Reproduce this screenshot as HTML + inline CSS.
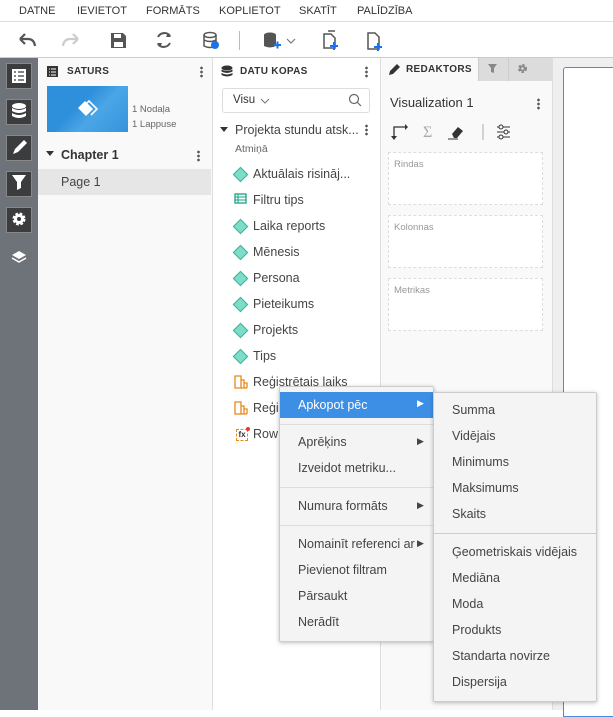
<!DOCTYPE html>
<html><head><meta charset="utf-8"><style>
*{box-sizing:border-box;margin:0;padding:0}
body{width:613px;height:710px;overflow:hidden;font-family:"Liberation Sans",sans-serif;background:#fff;position:relative;color:#333}
.a{position:absolute}
.menu span{position:absolute;top:5px;font-size:11px;color:#333}
.t{font-size:12.5px;color:#444;white-space:nowrap}
.dia{position:absolute;width:11px;height:11px;background:#7fdcc8;border:1px solid #2fb79a;transform:rotate(45deg)}
.vd{position:absolute;width:3px;height:12px;background:radial-gradient(circle,#555 1.2px,transparent 1.5px) 0 0/3px 4px}
.sb{position:absolute;left:6px;width:26px;height:26px;background:#3b3c3e;border:1px solid #888}
.cm div{position:absolute;font-size:12.5px;color:#444;white-space:nowrap}
</style></head><body>
<div class="a menu" style="left:0;top:0;width:613px;height:22px;border-bottom:1px solid #ddd">
<span style="left:19px">DATNE</span><span style="left:77px">IEVIETOT</span><span style="left:146px">FORMĀTS</span><span style="left:219px">KOPLIETOT</span><span style="left:299px">SKATĪT</span><span style="left:357px">PALĪDZĪBA</span></div>
<div class="a" style="left:0;top:22px;width:613px;height:36px;border-bottom:1px solid #ccc;background:#fff"></div>
<svg class="a" style="left:0;top:22px" width="400" height="36">
<path d="M20 17 l5-5 M20 17 l5 5 M20 17 h8 q6 0 7 7" stroke="#555" stroke-width="2.2" fill="none"/>
<path d="M78 17 l-5-5 M78 17 l-5 5 M78 17 h-8 q-6 0-7 7" stroke="#ccc" stroke-width="2.2" fill="none"/>
<path d="M111 11h12l3 3v12h-15z" fill="#555"/><rect x="114" y="12" width="7" height="4" fill="#fff"/><rect x="114" y="20" width="9" height="5" fill="#fff"/>
<path d="M158 15a7 7 0 0 1 12-1 M170 21a7 7 0 0 1-12 1" stroke="#555" stroke-width="2" fill="none"/><path d="M168 11l3 4h-5zM160 25l-3-4h5z" fill="#555"/>
<ellipse cx="210" cy="13" rx="6" ry="2.5" fill="none" stroke="#555" stroke-width="1.5"/><path d="M204 13v11q6 3 12 0v-11M204 18q6 3 12 0" stroke="#555" stroke-width="1.5" fill="none"/><circle cx="215" cy="23" r="4" fill="#1a73e8"/>
<rect x="239" y="9" width="1" height="19" fill="#bbb"/>
<ellipse cx="270" cy="13" rx="6" ry="2.5" fill="#555"/><path d="M264 13v11q6 3 12 0v-11z" fill="#555"/><path d="M274 23h7M277.5 19.5v7" stroke="#1a73e8" stroke-width="2"/>
<path d="M287 17l4 4 4-4" stroke="#777" stroke-width="1.2" fill="none"/>
<path d="M324 12h7l4 4v10h-11z" fill="none" stroke="#555" stroke-width="1.5"/><path d="M328 9h7" stroke="#555" stroke-width="1.5"/><path d="M330 24h8M334 20v8" stroke="#1a73e8" stroke-width="2"/>
<path d="M368 11h7l4 4v12h-11z" fill="none" stroke="#555" stroke-width="1.5"/><path d="M374 25h8M378 21v8" stroke="#1a73e8" stroke-width="2"/>
</svg>
<div class="a" style="left:0;top:58px;width:38px;height:652px;background:#6e7379"></div>
<div class="sb" style="top:63px"></div><div class="sb" style="top:99px"></div><div class="sb" style="top:135px"></div><div class="sb" style="top:171px"></div><div class="sb" style="top:207px"></div>
<svg class="a" style="left:0;top:58px" width="38" height="220">
<rect x="12" y="11" width="14" height="14" fill="#fff"/><path d="M14 14h2M18 14h6M14 18h2M18 18h6M14 22h2M18 22h6" stroke="#3b3c3e" stroke-width="1.3"/>
<ellipse cx="19" cy="48" rx="7" ry="3" fill="#fff"/><path d="M12 50q7 4 14 0v3q-7 4-14 0zM12 55q7 4 14 0v3q-7 4-14 0z" fill="#fff"/>
<path d="M13 96l2-5 9-9 3 3-9 9z" fill="#fff"/>
<path d="M12 117h14l-5 7v6l-4 2v-8z" fill="#fff"/>
<circle cx="19" cy="161" r="5" fill="#fff" stroke="#fff" stroke-width="3" stroke-dasharray="2.5 1.5"/><circle cx="19" cy="161" r="2" fill="#3b3c3e"/>
<path d="M12 197l7-4 7 4-7 4z" fill="#fff"/><path d="M12 200l7 4 7-4" stroke="#fff" stroke-width="1.5" fill="none"/>
</svg>
<div class="a" style="left:38px;top:58px;width:175px;height:652px;background:#f9f9f9;border-right:1px solid #ddd"></div>
<svg class="a" style="left:46px;top:65px" width="14" height="14"><rect x="1" y="1" width="11" height="11" fill="#333"/><path d="M3 4h1M5 4h5M3 7h1M5 7h5M3 10h1M5 10h5" stroke="#fff"/></svg>
<div class="a" style="left:67px;top:66px;font-size:10px;font-weight:bold;color:#333;letter-spacing:.3px">SATURS</div>
<div class="vd" style="left:200px;top:66px"></div>
<div class="a" style="left:47px;top:86px;width:81px;height:46px;background:linear-gradient(135deg,#2e8fdb 40%,#4aa6e6 60%,#3593dc)"></div>
<svg class="a" style="left:76px;top:97px" width="24" height="22"><path d="M2 11l7-7 8 8-7 7z" fill="#fff"/><path d="M7 10l6-6 8 8-6 6" fill="none" stroke="#fff" stroke-width="1.6"/></svg>
<div class="a" style="left:132px;top:104px;font-size:9.5px;color:#666">1 Nodaļa</div>
<div class="a" style="left:132px;top:119px;font-size:9.5px;color:#666">1 Lappuse</div>
<div class="a" style="left:46px;top:151px;width:0;height:0;border-left:4px solid transparent;border-right:4px solid transparent;border-top:5px solid #333"></div>
<div class="a" style="left:61px;top:148px;font-size:12.5px;font-weight:bold;color:#333">Chapter 1</div>
<div class="vd" style="left:197px;top:150px"></div>
<div class="a" style="left:38px;top:169px;width:173px;height:26px;background:#e6e6e6"></div>
<div class="a t" style="left:61px;top:175px">Page 1</div>
<div class="a" style="left:213px;top:58px;width:168px;height:652px;background:#fff;border-right:1px solid #ddd"></div>
<svg class="a" style="left:221px;top:65px" width="12" height="14"><ellipse cx="6" cy="3" rx="5.5" ry="2.5" fill="#333"/><path d="M0.5 4.5q5.5 3 11 0v2q-5.5 3-11 0zM0.5 8q5.5 3 11 0v2q-5.5 3-11 0z" fill="#333"/></svg>
<div class="a" style="left:240px;top:66px;font-size:10px;font-weight:bold;color:#333;letter-spacing:.3px">DATU KOPAS</div>
<div class="vd" style="left:365px;top:66px"></div>
<div class="a" style="left:222px;top:88px;width:148px;height:25px;border:1px solid #ddd;border-radius:3px"></div>
<div class="a" style="left:233px;top:94px;font-size:11.5px;color:#333">Visu</div>
<svg class="a" style="left:260px;top:96px" width="12" height="10"><path d="M1 3l4 4 4-4" stroke="#777" fill="none"/></svg>
<svg class="a" style="left:348px;top:93px" width="14" height="14"><circle cx="6" cy="6" r="4.5" stroke="#666" fill="none" stroke-width="1.2"/><path d="M9.5 9.5l3.5 3.5" stroke="#666" stroke-width="1.2"/></svg>
<div class="a" style="left:220px;top:127px;width:0;height:0;border-left:4px solid transparent;border-right:4px solid transparent;border-top:5px solid #333"></div>
<div class="a t" style="left:235px;top:123px">Projekta stundu atsk...</div>
<div class="vd" style="left:365px;top:124px"></div>
<div class="a" style="left:235px;top:143px;font-size:10.5px;color:#666">Atmiņā</div>
<div class="dia" style="left:235px;top:169px"></div><div class="a t" style="left:253px;top:167px">Aktuālais risināj...</div>
<svg class="a" style="left:234px;top:193px" width="14" height="12"><rect x="1" y="1" width="11" height="9" fill="none" stroke="#1aa085" stroke-width="1.3"/><path d="M1 4h11M1 7h11M4 1v9" stroke="#1aa085"/></svg>
<div class="a t" style="left:253px;top:193px">Filtru tips</div>
<div class="dia" style="left:235px;top:221px"></div><div class="a t" style="left:253px;top:219px">Laika reports</div>
<div class="dia" style="left:235px;top:247px"></div><div class="a t" style="left:253px;top:245px">Mēnesis</div>
<div class="dia" style="left:235px;top:273px"></div><div class="a t" style="left:253px;top:271px">Persona</div>
<div class="dia" style="left:235px;top:299px"></div><div class="a t" style="left:253px;top:297px">Pieteikums</div>
<div class="dia" style="left:235px;top:325px"></div><div class="a t" style="left:253px;top:323px">Projekts</div>
<div class="dia" style="left:235px;top:351px"></div><div class="a t" style="left:253px;top:349px">Tips</div>
<svg class="a" style="left:234px;top:375px" width="14" height="14"><path d="M1 1h6v12H1zM7 5h3v8M10 8h3v5M1 13h12" fill="none" stroke="#e8891a" stroke-width="1.3"/></svg>
<div class="a t" style="left:253px;top:375px">Reģistrētais laiks</div>
<svg class="a" style="left:234px;top:401px" width="14" height="14"><path d="M1 1h6v12H1zM7 5h3v8M10 8h3v5M1 13h12" fill="none" stroke="#e8891a" stroke-width="1.3"/></svg>
<div class="a t" style="left:253px;top:401px">Reģis</div>
<div class="a" style="left:236px;top:429px;width:12px;height:12px;border:1px dashed #e8891a;font-size:8px;font-weight:bold;line-height:10px;text-align:center">fx</div>
<div class="a" style="left:246px;top:427px;width:4px;height:4px;border-radius:2px;background:#e33"></div>
<div class="a t" style="left:253px;top:427px">Row</div>
<div class="a" style="left:381px;top:58px;width:172px;height:652px;background:#f9f9f9;border-right:1px solid #ddd"></div>
<div class="a" style="left:478px;top:58px;width:74px;height:23px;background:#dcdcdc"></div>
<div class="a" style="left:478px;top:58px;width:1px;height:23px;background:#ccc"></div>
<div class="a" style="left:508px;top:58px;width:1px;height:23px;background:#ccc"></div>
<svg class="a" style="left:388px;top:62px" width="14" height="14"><path d="M1 13l1-4 7-7 3 3-7 7z" fill="#333"/></svg>
<div class="a" style="left:406px;top:64px;font-size:10px;font-weight:bold;color:#333;letter-spacing:.3px">REDAKTORS</div>
<svg class="a" style="left:488px;top:64px" width="10" height="10"><path d="M0 0h9l-3 4v5l-3-1v-4z" fill="#888"/></svg>
<svg class="a" style="left:517px;top:63px" width="11" height="11"><circle cx="5.5" cy="5.5" r="3" fill="#888" stroke="#888" stroke-width="3" stroke-dasharray="2 1.4"/><circle cx="5.5" cy="5.5" r="1.3" fill="#dcdcdc"/></svg>
<div class="a" style="left:390px;top:95px;font-size:13px;color:#333">Visualization 1</div>
<div class="vd" style="left:537px;top:98px"></div>
<svg class="a" style="left:390px;top:122px" width="130" height="20">
<path d="M4 16V5h11" stroke="#333" stroke-width="1.3" fill="none"/><path d="M15 2l3 3-3 3zM1 14l3 4 3-4z" fill="#333"/>
<text x="33" y="15" font-size="16" fill="#aaa" font-family="Liberation Serif">Σ</text>
<path d="M62 12l6-7 5 4-6 7h-3z" fill="#333"/><path d="M58 17h10" stroke="#333"/>
<path d="M93 2v16" stroke="#aaa"/>
<path d="M107 5h13M107 10h13M107 15h13" stroke="#333"/><circle cx="111" cy="5" r="2" fill="#f9f9f9" stroke="#333"/><circle cx="116" cy="10" r="2" fill="#f9f9f9" stroke="#333"/><circle cx="111" cy="15" r="2" fill="#f9f9f9" stroke="#333"/>
</svg>
<div class="a" style="left:388px;top:152px;width:155px;height:53px;border:1px dashed #ddd;background:#fff"></div>
<div class="a" style="left:394px;top:159px;font-size:9.5px;color:#999">Rindas</div>
<div class="a" style="left:388px;top:215px;width:155px;height:53px;border:1px dashed #ddd;background:#fff"></div>
<div class="a" style="left:394px;top:222px;font-size:9.5px;color:#999">Kolonnas</div>
<div class="a" style="left:388px;top:278px;width:155px;height:53px;border:1px dashed #ddd;background:#fff"></div>
<div class="a" style="left:394px;top:285px;font-size:9.5px;color:#999">Metrikas</div>
<div class="a" style="left:553px;top:58px;width:60px;height:652px;background:#efefef"></div>
<div class="a" style="left:563px;top:67px;width:60px;height:650px;background:#fff;border:1px solid #4a8be0;border-radius:3px 0 0 0"></div>
<div class="a cm" style="left:279px;top:386px;width:155px;height:256px;background:#f4f4f4;border:1px solid #ccc;box-shadow:0 1px 4px rgba(0,0,0,.25);border-radius:2px">
<div style="left:0;top:5px;width:153px;height:26px;background:#3d8fe6"></div>
<div style="left:18px;top:11px;color:#fff">Apkopot pēc</div><div style="left:137px;top:11px;color:#fff;font-size:9px">▶</div>
<div style="left:0;top:37px;width:153px;height:1px;background:#ddd"></div>
<div style="left:18px;top:48px">Aprēķins</div><div style="left:137px;top:49px;font-size:9px">▶</div>
<div style="left:18px;top:74px">Izveidot metriku...</div>
<div style="left:0;top:100px;width:153px;height:1px;background:#ddd"></div>
<div style="left:18px;top:112px">Numura formāts</div><div style="left:137px;top:113px;font-size:9px">▶</div>
<div style="left:0;top:138px;width:153px;height:1px;background:#ddd"></div>
<div style="left:18px;top:150px">Nomainīt referenci ar</div><div style="left:137px;top:151px;font-size:9px">▶</div>
<div style="left:18px;top:176px">Pievienot filtram</div>
<div style="left:18px;top:202px">Pārsaukt</div>
<div style="left:18px;top:228px">Nerādīt</div>
</div>
<div class="a cm" style="left:433px;top:392px;width:164px;height:310px;background:#f4f4f4;border:1px solid #ccc;box-shadow:0 1px 4px rgba(0,0,0,.25);border-radius:2px">
<div style="left:18px;top:10px">Summa</div>
<div style="left:18px;top:36px">Vidējais</div>
<div style="left:18px;top:62px">Minimums</div>
<div style="left:18px;top:88px">Maksimums</div>
<div style="left:18px;top:114px">Skaits</div>
<div style="left:0;top:140px;width:162px;height:1px;background:#ccc"></div>
<div style="left:18px;top:152px">Ģeometriskais vidējais</div>
<div style="left:18px;top:178px">Mediāna</div>
<div style="left:18px;top:204px">Moda</div>
<div style="left:18px;top:230px">Produkts</div>
<div style="left:18px;top:256px">Standarta novirze</div>
<div style="left:18px;top:282px">Dispersija</div>
</div>
</body></html>
